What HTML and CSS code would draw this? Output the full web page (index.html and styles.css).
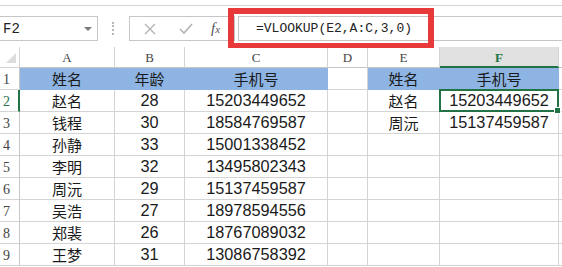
FILE: index.html
```html
<!DOCTYPE html>
<html>
<head>
    <meta charset="UTF-8">
    <title>VLOOKUP</title>
    <link rel="stylesheet" href="styles.css">
</head>
<body>
<div class="sheet">
    <div class="ribbon"></div>

    <div class="fbar">
        <div class="namebox">
            <span class="ref">F2</span>
            <span class="arrow"></span>
        </div>
        <div class="grip"></div>
        <div class="fx-buttons">
            <svg class="btn" width="14" height="14" viewBox="0 0 14 14">
                <path d="M2 2 L12 12 M12 2 L2 12" stroke="#b4b4b4" stroke-width="1.4" fill="none"/>
            </svg>
            <svg class="btn" width="16" height="14" viewBox="0 0 16 14">
                <path d="M2 7 L6 11 L14 2" stroke="#b4b4b4" stroke-width="1.6" fill="none"/>
            </svg>
            <span class="fx">f<small>x</small></span>
        </div>
        <div class="formula">=VLOOKUP(E2,A:C,3,0)</div>
    </div>

    <div class="grid">
        <div class="corner"><span class="tri"></span></div>
        <div class="ch">A</div>
        <div class="ch">B</div>
        <div class="ch">C</div>
        <div class="ch">D</div>
        <div class="ch">E</div>
        <div class="ch active">F</div>
        <div class="ch"></div>

        <div class="rh">1</div>
        <div class="c blue">姓名</div>
        <div class="c blue">年龄</div>
        <div class="c blue">手机号</div>
        <div class="c"></div>
        <div class="c blue">姓名</div>
        <div class="c blue">手机号</div>
        <div class="c"></div>

        <div class="rh active">2</div>
        <div class="c">赵名</div>
        <div class="c num">28</div>
        <div class="c num">15203449652</div>
        <div class="c"></div>
        <div class="c">赵名</div>
        <div class="c num selected">15203449652<span class="handle"></span></div>
        <div class="c"></div>

        <div class="rh">3</div>
        <div class="c">钱程</div>
        <div class="c num">30</div>
        <div class="c num">18584769587</div>
        <div class="c"></div>
        <div class="c">周沅</div>
        <div class="c num">15137459587</div>
        <div class="c"></div>

        <div class="rh">4</div>
        <div class="c">孙静</div>
        <div class="c num">33</div>
        <div class="c num">15001338452</div>
        <div class="c"></div>
        <div class="c"></div>
        <div class="c"></div>
        <div class="c"></div>

        <div class="rh">5</div>
        <div class="c">李明</div>
        <div class="c num">32</div>
        <div class="c num">13495802343</div>
        <div class="c"></div>
        <div class="c"></div>
        <div class="c"></div>
        <div class="c"></div>

        <div class="rh">6</div>
        <div class="c">周沅</div>
        <div class="c num">29</div>
        <div class="c num">15137459587</div>
        <div class="c"></div>
        <div class="c"></div>
        <div class="c"></div>
        <div class="c"></div>

        <div class="rh">7</div>
        <div class="c">吴浩</div>
        <div class="c num">27</div>
        <div class="c num">18978594556</div>
        <div class="c"></div>
        <div class="c"></div>
        <div class="c"></div>
        <div class="c"></div>

        <div class="rh">8</div>
        <div class="c">郑裴</div>
        <div class="c num">26</div>
        <div class="c num">18767089032</div>
        <div class="c"></div>
        <div class="c"></div>
        <div class="c"></div>
        <div class="c"></div>

        <div class="rh">9</div>
        <div class="c">王梦</div>
        <div class="c num">31</div>
        <div class="c num">13086758392</div>
        <div class="c"></div>
        <div class="c"></div>
        <div class="c"></div>
        <div class="c"></div>
    </div>

    <div class="callout"></div>
</div>
</body>
</html>
```

FILE: styles.css
```css
body {
    margin: 0;
    background: #fff;
}
.sheet {
    position: relative;
    width: 562px;
    height: 267px;
    overflow: hidden;
    background: #fff;
    font-family: "Noto Sans CJK SC", sans-serif;
}

/* bottom edge of the ribbon */
.ribbon {
    height: 5px;
    border-bottom: 1px solid #d4d4d4;
}

/* formula bar */
.fbar {
    display: flex;
    height: 25px;
    margin-top: 10px;
}
.namebox {
    width: 98px;
    box-sizing: border-box;
    border: 1px solid #c6c6c6;
    border-left: none;
    display: flex;
    align-items: center;
    justify-content: space-between;
    padding: 0 5px 0 3px;
}
.ref {
    font-family: "Liberation Mono", monospace;
    font-size: 14px;
    color: #222;
}
.arrow {
    width: 0;
    height: 0;
    border-left: 4px solid transparent;
    border-right: 4px solid transparent;
    border-top: 4px solid #7a7a7a;
}
.grip {
    width: 0;
    height: 13px;
    margin: 6px 15px 0 14px;
    border-left: 2px dotted #b8b8b8;
}
.fx-buttons {
    width: 106px;
    box-sizing: border-box;
    border: 1px solid #c6c6c6;
    display: flex;
    align-items: center;
    padding-left: 13px;
    gap: 21px;
}
.fx {
    font-family: "Liberation Serif", serif;
    font-style: italic;
    font-size: 15px;
    color: #555;
    margin-left: -4px;
}
.fx small {
    font-size: 11px;
}
.formula {
    flex: 1;
    margin-left: 3px;
    border: 1px solid #c6c6c6;
    border-right: none;
    padding-left: 17px;
    font-family: "Liberation Mono", monospace;
    font-size: 13px;
    line-height: 23px;
    color: #222;
}

/* worksheet */
.grid {
    margin-top: 6px;
    display: grid;
    grid-template-columns: 20px 95px 70px 143px 40px 72px 119px 20px;
    grid-template-rows: 21px repeat(10, 22px);
}
.grid > div {
    box-sizing: border-box;
    border-right: 1px solid #d4d4d4;
    border-bottom: 1px solid #d4d4d4;
    display: flex;
    align-items: center;
    justify-content: center;
}
.corner {
    position: relative;
    background: #fff;
}
.tri {
    position: absolute;
    right: 3px;
    bottom: 4px;
    width: 0;
    height: 0;
    border-left: 10px solid transparent;
    border-bottom: 10px solid #dcdcdc;
}
.grid > .ch {
    font-family: "Liberation Serif", serif;
    font-size: 13px;
    color: #444;
    background: #fff;
    border-bottom-color: #c6c6c6;
    padding-top: 2px;
}
.grid > .ch.active {
    background: #e1e1e1;
    color: #217346;
    font-weight: bold;
    border-bottom: 2px solid #217346;
}
.grid > .rh {
    justify-content: flex-start;
    padding: 3px 0 0 3px;
    font-family: "Liberation Serif", serif;
    font-size: 14px;
    color: #444;
    border-right-color: #c6c6c6;
}
.grid > .rh.active {
    color: #217346;
    border-right: 2px solid #217346;
}
.c {
    font-size: 15px;
    color: #1a1a1a;
}
.num {
    font-family: "Liberation Sans", sans-serif;
    font-size: 16.3px;
}
.grid > .blue {
    background: #8db4e2;
    border-color: #8db4e2;
}
.grid > .selected {
    position: relative;
    border: 2px solid #217346;
    margin: -1px 0 0 -1px;
}
.handle {
    position: absolute;
    right: -4px;
    bottom: -4px;
    width: 5px;
    height: 5px;
    background: #217346;
    border: 1px solid #fff;
}

/* red annotation around the formula */
.callout {
    position: absolute;
    left: 228px;
    top: 8px;
    width: 206px;
    height: 40px;
    box-sizing: border-box;
    border: 6px solid #e8393b;
    border-bottom-width: 5px;
}
```
